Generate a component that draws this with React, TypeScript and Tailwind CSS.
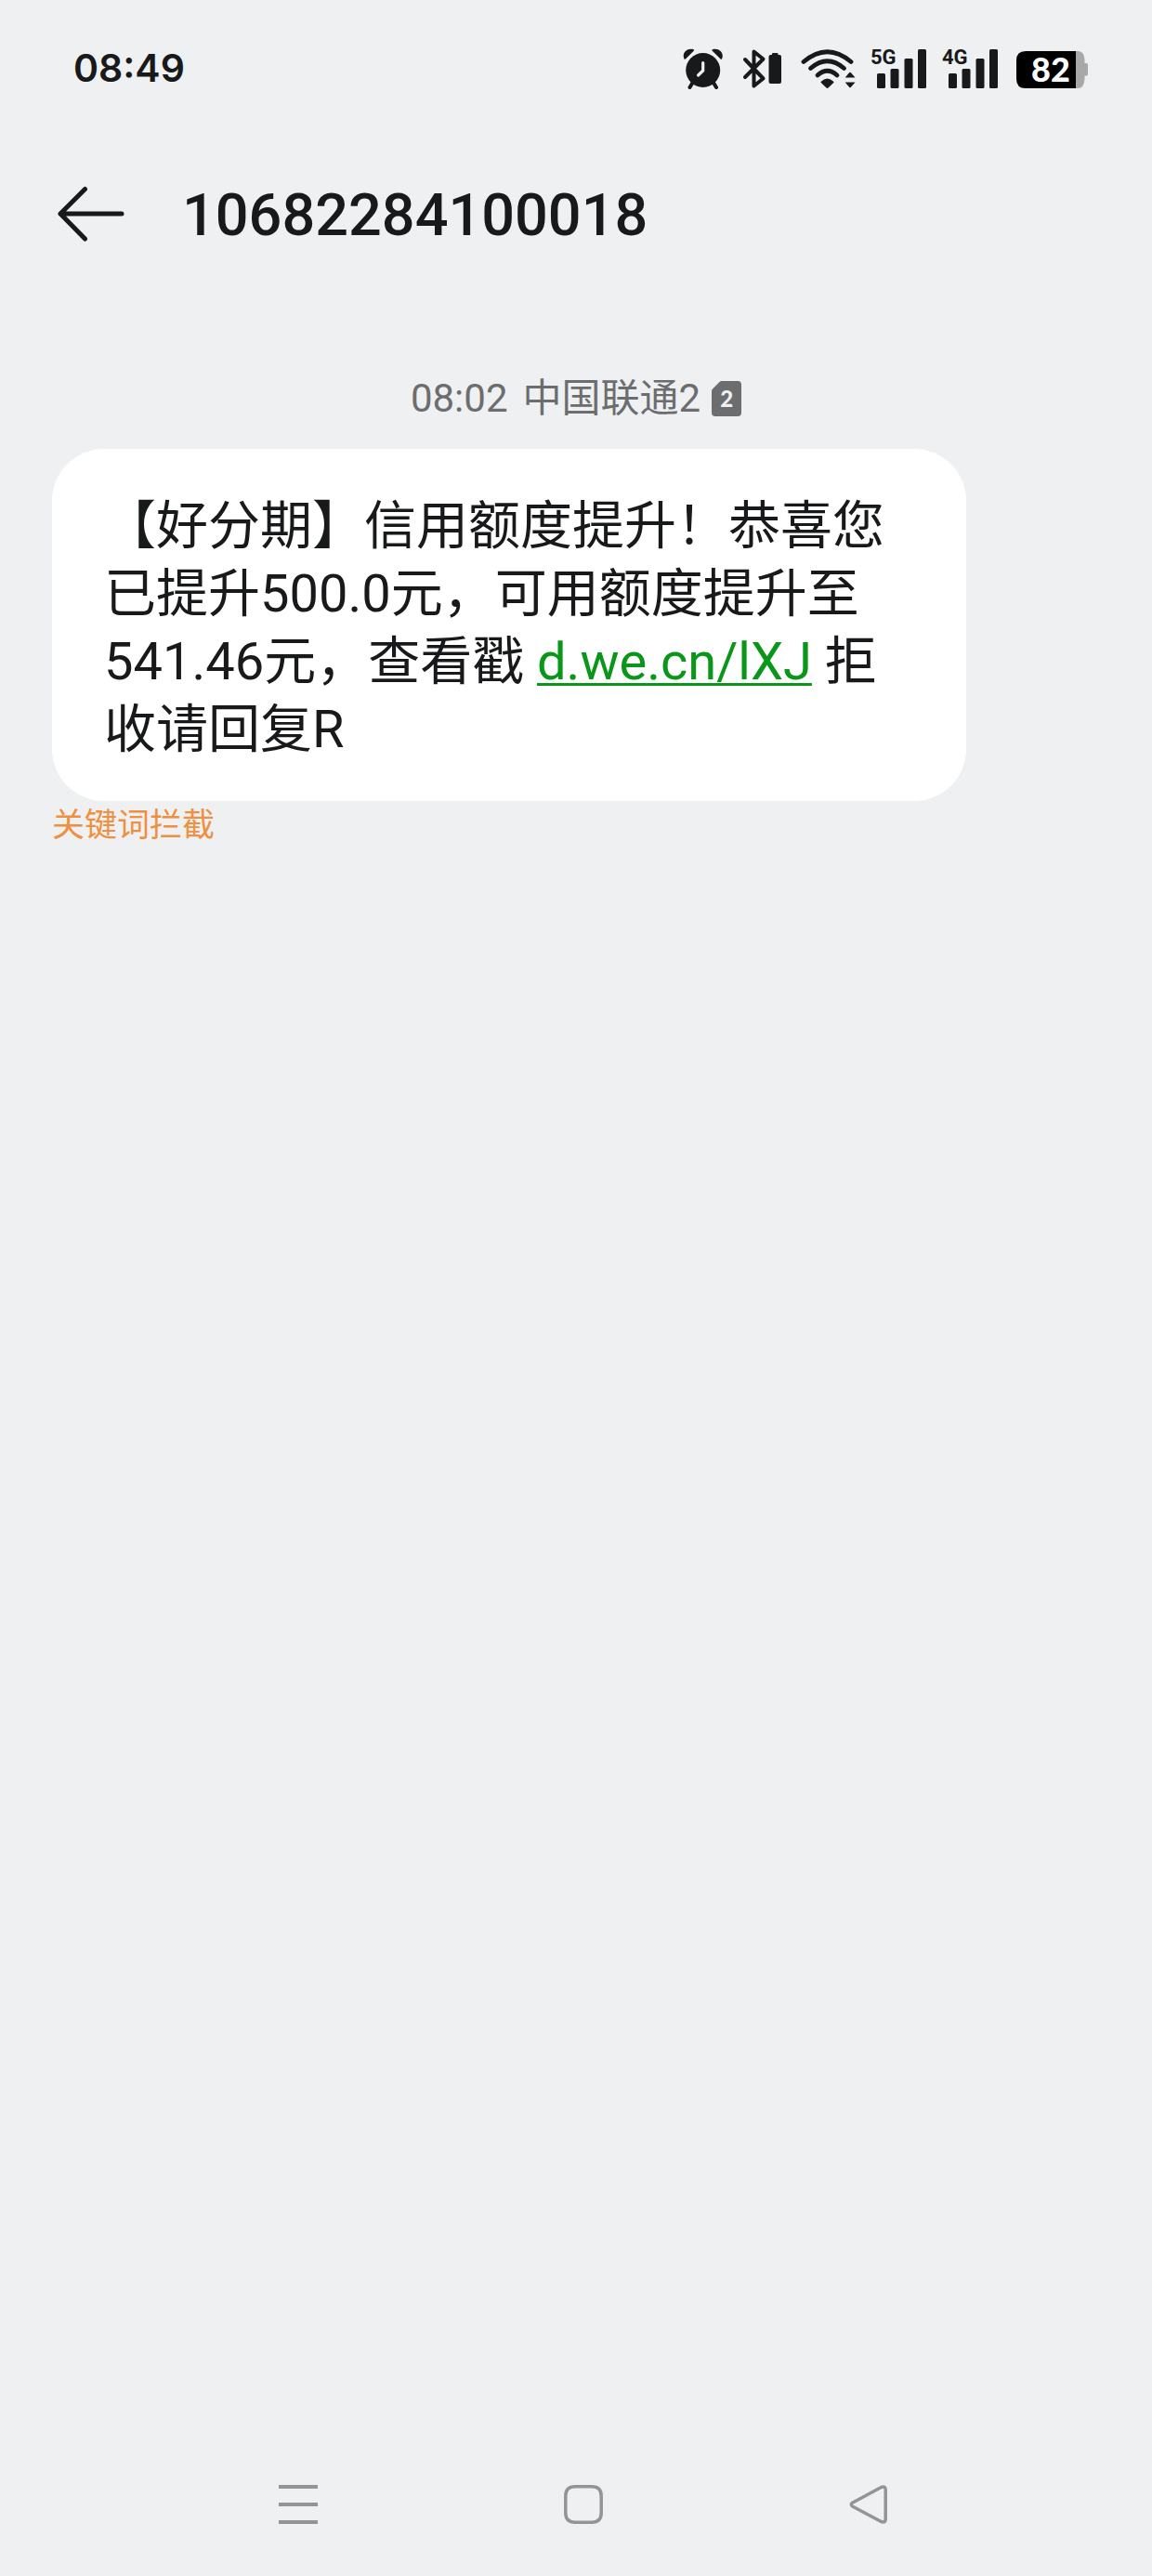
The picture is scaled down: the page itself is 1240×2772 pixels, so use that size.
const message = {
  sender: "10682284100018",
  time: "08:02",
  carrier: "中国联通2",
  before: "【好分期】信用额度提升！恭喜您已提升500.0元，可用额度提升至541.46元，查看戳 ",
  link: "d.we.cn/lXJ",
  after: " 拒收请回复R",
  tag: "关键词拦截",
}

function AlarmIcon() {
  return (
    <svg width="48" height="44" viewBox="0 0 48 44" fill="none">
      <path d="M3.500 11.500C.5 5.500 6.500-1 13.500 1.200Q14.800 1.800 13.500 3L5.200 11.200Q4.200 12.300 3.500 11.500Z" fill="#18191a" />
      <path d="M44 11.500C47 5.500 41-1 34 1.200Q32.700 1.800 34 3L42.300 11.200Q43.300 12.300 44 11.500Z" fill="#18191a" />
      <path d="M12.500 37L9.500 42M35 37L38 42" stroke="#18191a" strokeWidth="4" strokeLinecap="round" />
      <circle cx="23.700" cy="23.500" r="18.500" fill="#18191a" />
      <path d="M23.700 15.500V24L18.500 29" stroke="#eff0f2" strokeWidth="3.200" strokeLinecap="round" strokeLinejoin="round" />
    </svg>
  )
}

function BluetoothIcon() {
  return (
    <svg width="48" height="44" viewBox="0 0 48 44" fill="none">
      <path
        d="M5 12L24.500 32.500L14.500 40.500V3.500L24.500 11.500L5 31"
        stroke="#18191a"
        strokeWidth="4"
        strokeLinecap="round"
        strokeLinejoin="round"
      />
      <path d="M34 7V6Q34 5 35 5H39.500Q40.500 5 40.500 6V7H42Q44 7 44 9V36Q44 38 42 38H32.500Q30.500 38 30.500 36V9Q30.500 7 32.500 7Z" fill="#18191a" />
    </svg>
  )
}

function WifiIcon() {
  return (
    <svg width="60" height="44" viewBox="0 0 60 44" fill="none">
      <g stroke="#18191a" strokeWidth="4.800" strokeLinecap="round">
        <path d="M4 14.500Q29.500-7 55 14.500" />
        <path d="M11.500 21.500Q29.500 6 47.500 21.500" />
        <path d="M19 29Q29.500 19.500 40 29" />
      </g>
      <path d="M22.500 36Q29.500 29 36.500 36Q36.700 36.700 36 37.300L30.500 42.500Q29.500 43.300 28.500 42.500L23 37.300Q22.300 36.700 22.500 36Z" fill="#18191a" />
      <path d="M48.700 31.500L53.300 26Q54 25.300 54.700 26L59.500 31.500ZM48.700 36.500L53.300 42Q54 42.700 54.700 42L59.500 36.500Z" fill="#18191a" />
    </svg>
  )
}

function Signal({ label }: { label: string }) {
  return (
    <div className="relative">
      <svg width="61" height="44" viewBox="0 0 61 44" fill="#18191a">
        <rect x="7" y="27" width="9" height="16" rx="1.500" />
        <rect x="21.500" y="22" width="9" height="21" rx="1.500" />
        <rect x="36.500" y="11" width="9" height="32" rx="1.500" />
        <rect x="51" y="1" width="9" height="42" rx="1.500" />
      </svg>
      <span className="absolute top-0 left-0 text-[22px] leading-5 font-bold">{label}</span>
    </div>
  )
}

function Battery({ level }: { level: number }) {
  return (
    <div className="relative">
      <svg width="80" height="44" viewBox="0 0 80 44">
        <path d="M67 3H69Q76 3 76.500 12V16H78.500Q80 16 80 18V28Q80 29.500 78.500 29.500H76.500V33Q76 43 69 43H67Z" fill="#a8a8a8" />
        <path d="M13 3H67V43H13Q3 43 3 33V13Q3 3 13 3Z" fill="#000" />
      </svg>
      <span className="absolute inset-0 flex items-center justify-center font-['Lato',sans-serif] text-[36px] leading-none font-black text-white">
        {level}
      </span>
    </div>
  )
}

function StatusBar() {
  return (
    <div className="flex h-[148px] items-center justify-between pr-[69px] pl-[79px]">
      <span className="font-['Inter',sans-serif] text-[41px] font-semibold">08:49</span>
      <div className="flex items-center gap-4">
        <AlarmIcon />
        <BluetoothIcon />
        <WifiIcon />
        <Signal label="5G" />
        <Signal label="4G" />
        <Battery level={82} />
      </div>
    </div>
  )
}

export default function App() {
  return (
    <div className="flex min-h-screen flex-col bg-[#eff0f2] font-['Roboto','Noto_Sans_CJK_SC',sans-serif] text-[#18191a]" lang="zh-CN">
      <StatusBar />

      <header className="flex h-[164px] items-center gap-[60px] px-[60px]">
        <button aria-label="返回">
          <svg width="76" height="60" viewBox="0 0 76 60" fill="none" stroke="#18191a" strokeWidth="5" strokeLinecap="round" strokeLinejoin="round">
            <path d="M31.500 3.500L5 30L31.500 57M5 30H71" />
          </svg>
        </button>
        <h1 className="pt-1 text-[63px] font-medium">{message.sender}</h1>
      </header>

      <main className="flex flex-1 flex-col items-start px-14 pt-[85px]">
        {/* Time and SIM */}
        <div className="flex h-[86px] items-start gap-4 self-center text-[42px] leading-[64px] text-[#6c6d6e]">
          <span>{message.time}</span>
          <span className="flex items-center gap-3">
            {message.carrier}
            <span className="relative">
              <svg width="32" height="38" viewBox="0 0 32 38">
                <path d="M11 0H28Q32 0 32 4V34Q32 38 28 38H4Q0 38 0 34V11Q0 9.500 1 8.500L8.500 1Q9.500 0 11 0Z" fill="#6c6d6e" />
              </svg>
              <span className="absolute inset-0 flex items-center justify-center font-['Lato',sans-serif] text-[24px] leading-none font-black text-[#eff0f2]">
                2
              </span>
            </span>
          </span>
        </div>

        {/* Message bubble */}
        <p className="w-full max-w-[984px] rounded-[56px] bg-white px-14 pt-[47px] pb-10 text-[56px] leading-[73px]">
          {message.before}
          <a
            href="#"
            className="text-[#0a9619] underline decoration-[3px] underline-offset-4 [text-decoration-skip-ink:none]"
          >
            {message.link}
          </a>
          {message.after}
        </p>
        <p className="text-[35px] leading-[54px] text-[#ee9040]">{message.tag}</p>
      </main>

      {/* System navigation */}
      <nav className="grid h-[154px] grid-cols-3 items-center justify-items-center pr-[152px] pl-[168px]">
        <button aria-label="最近任务">
          <svg width="42" height="42" viewBox="0 0 42 42" stroke="#929495" strokeWidth="4">
            <path d="M0 2H42M0 21H42M0 40H42" />
          </svg>
        </button>
        <button aria-label="主页">
          <svg width="42" height="42" viewBox="0 0 42 42" fill="none" stroke="#929495" strokeWidth="3.500">
            <path d="M12 1.800H30Q40.200 1.800 40.200 12V30Q40.200 40.200 30 40.200H12Q1.800 40.200 1.800 30V12Q1.800 1.800 12 1.800Z" />
          </svg>
        </button>
        <button aria-label="后退">
          <svg width="42" height="42" viewBox="0 0 42 42" fill="none" stroke="#929495" strokeWidth="3.500" strokeLinejoin="round">
            <path d="M3.500 19.200L34.500 2.500Q39 1 39.200 5V37Q39 41 34.500 39.500L3.500 23Q1 21 3.500 19.200Z" />
          </svg>
        </button>
      </nav>
    </div>
  )
}
